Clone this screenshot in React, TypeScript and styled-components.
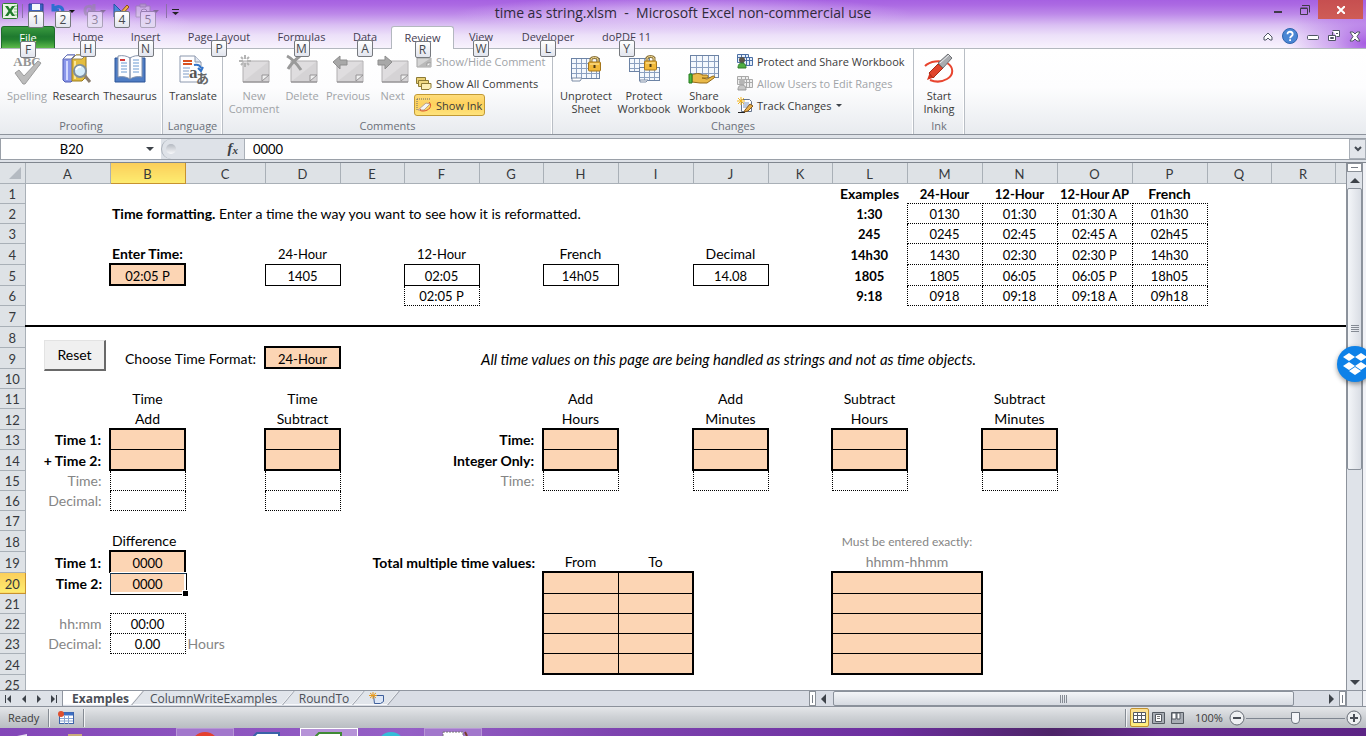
import React from 'react';
import styled, { createGlobalStyle, css } from 'styled-components';

const UI = '"Open Sans", "Noto Sans", sans-serif';
const CELL = 'Lato, "Open Sans", sans-serif';

const Global = createGlobalStyle`
  *, *::before, *::after { box-sizing: border-box; }
  html, body, #root { height: 100%; }
  body { margin: 0; overflow: hidden; font-family: ${UI}; font-size: 11px; color: #3b3b3b; }
  button, input { font: inherit; color: inherit; margin: 0; padding: 0; border: 0; background: none; }
  svg { display: block; flex: none; }
`;

const Window = styled.div`
  display: flex;
  flex-direction: column;
  height: 100vh;
  position: relative;
  overflow: hidden;
  background: #dee2e8;
`;

/* ---------- title bar and ribbon tabs ---------- */

const Top = styled.header`
  display: flex;
  flex-direction: column;
  flex: none;
  height: 49px;
  border-bottom: 1px solid #b3b8bf;
  background:
    radial-gradient(ellipse 80px 50px at 100% 90%, rgba(166, 92, 226, 1), rgba(166, 92, 226, 0.5) 40%, rgba(166, 92, 226, 0) 100%),
    radial-gradient(ellipse 110px 16px at 85px 24px, rgba(240, 228, 252, 0.6), rgba(240, 228, 252, 0) 100%),
    radial-gradient(ellipse 230px 18px at 50% 14px, rgba(235, 220, 250, 0.65), rgba(235, 220, 250, 0) 100%),
    linear-gradient(#a661e1 0, #ac6ae3 5px, #bd89e9 14px, #dabff3 25px, #ece0f9 35px, #f8f3fd 48px);
`;

const TitleBar = styled.div`
  display: grid;
  grid-template-columns: 200px 1fr 200px;
  height: 26px;
`;

const Title = styled.h1`
  margin: 0;
  text-align: center;
  font-size: 14px;
  font-weight: 400;
  line-height: 26px;
  color: #2f2a3a;
  white-space: pre;
`;

const QuickBar = styled.div`
  display: flex;
  align-items: flex-start;
  padding: 3px 0 0 2px;
`;

const QuickButton = styled.button<{ $w: number; $off?: boolean }>`
  position: relative;
  display: flex;
  align-items: center;
  gap: 2px;
  width: ${p => p.$w}px;
  height: 16px;
  opacity: ${p => (p.$off ? 0.5 : 1)};
`;

const Separator = styled.span`
  width: 1px;
  height: 14px;
  margin: 1px 5px 0 3px;
  background: #8c70a8;
`;

const KeyTip = styled.kbd<{ $low?: boolean; $left?: number }>`
  position: absolute;
  z-index: 2;
  top: ${p => (p.$low ? 14 : 8)}px;
  left: ${p => (p.$left === undefined ? '50%' : p.$left + 'px')};
  margin-left: ${p => (p.$left === undefined ? -8 : 0)}px;
  width: 16px;
  height: 17px;
  border: 1px solid #76797e;
  border-radius: 2px;
  background: linear-gradient(#fff, #e2e5ee);
  font: 12px/15px ${UI};
  text-align: center;
  color: #46484d;
`;

const WindowButtons = styled.div`
  display: flex;
  justify-content: flex-end;
  align-items: flex-start;
  padding-right: 3px;
`;

const WindowButton = styled.button<{ $close?: boolean }>`
  display: grid;
  place-items: center;
  width: ${p => (p.$close ? 45 : 27)}px;
  height: 19px;
  ${p => p.$close && css`
    && { background: linear-gradient(#c64f50, #cf5c56); }
  `}
`;

const TabRow = styled.nav`
  display: flex;
  flex: 1;
  padding-left: 1px;
`;

const Tab = styled.button<{ $w: number; $kind?: 'file' | 'active' }>`
  position: relative;
  width: ${p => p.$w}px;
  height: 22px;
  line-height: 20px;
  white-space: nowrap;
  color: #453d52;
  ${p => p.$kind === 'file' && css`
    && {
      margin-right: 4px;
      color: #fff;
      border: 1px solid #1f6b2c;
      border-bottom: 0;
      border-radius: 3px 3px 0 0;
      background: linear-gradient(#3a9a3f 0, #1f7a2f 45%, #23812f 60%, #5cba4a 100%);
    }
  `}
  ${p => p.$kind === 'active' && css`
    && {
      height: 23px;
      border: 1px solid #b3b8bf;
      border-bottom: 0;
      border-radius: 3px 3px 0 0;
      background: #fff;
    }
  `}
`;

const TabTools = styled.div`
  display: flex;
  align-items: center;
  gap: 9px;
  margin-left: auto;
  padding: 0 5px 3px 0;
`;

/* ---------- ribbon ---------- */

const Ribbon = styled.div`
  display: flex;
  flex: none;
  height: 86px;
  border-bottom: 1px solid #8d939c;
  background: linear-gradient(#fff 0, #fdfdfe 45%, #e8ebef 100%);
`;

const Group = styled.section<{ $w: number; $pad: number }>`
  display: flex;
  flex-direction: column;
  width: ${p => p.$w}px;
  border-right: 1px solid #b9bec5;
  box-shadow: inset -1px 0 #fff;
  padding-left: ${p => p.$pad}px;
`;

const GroupBody = styled.div`
  display: flex;
  flex: 1;
`;

const GroupName = styled.h2<{ $pad: number }>`
  margin: 0 0 1px -${p => p.$pad}px;
  font-size: 11px;
  font-weight: 400;
  line-height: 15px;
  text-align: center;
  color: #6b7079;
`;

const BigButton = styled.button<{ $w: number; $off?: boolean }>`
  && { color: ${p => (p.$off ? '#a0a3a7' : '#3b3b3b')}; }
  display: flex;
  flex-direction: column;
  align-items: center;
  flex: none;
  width: ${p => p.$w}px;
  && { padding-top: 4px; }
  line-height: 13px;
  svg { margin-bottom: 4px; }
  span { white-space: pre; }
`;

const SmallColumn = styled.div`
  display: flex;
  flex-direction: column;
  align-items: flex-start;
  padding-top: 1px;
`;

const SmallButton = styled.button<{ $off?: boolean; $on?: boolean }>`
  && {
    display: flex;
    align-items: center;
    gap: 4px;
    height: 22px;
    padding: 0 2px 0 1px;
    border: 1px solid transparent;
    border-radius: 3px;
    white-space: nowrap;
    color: ${p => (p.$off ? '#a0a3a7' : '#3b3b3b')};
  }
  ${p => p.$on && css`
    && {
      border-color: #c29a35;
      background: linear-gradient(#fddc7c, #fed15c 45%, #fee37c);
    }
  `}
`;

/* ---------- formula bar ---------- */

const FormulaBar = styled.div`
  display: flex;
  flex: none;
  height: 22px;
  margin-top: 3px;
  border: 1px solid #9aa0a8;
  border-right: 0;
  background: #dee2e8;
  font-family: ${CELL};
  font-size: 13px;
  color: #000;
`;

const NameBox = styled.div`
  display: flex;
  align-items: center;
  width: 160px;
  background: #fff;
  input { width: 145px; padding-right: 4px; text-align: center; outline: 0; }
`;

const FxArea = styled.div`
  display: flex;
  align-items: center;
  justify-content: space-between;
  width: 84px;
  padding-right: 6px;
  border: 1px solid #aab0b8;
  border-width: 0 1px 0 1px;
  border-radius: 11px 0 0 11px;
  font: italic bold 15px/18px "Liberation Serif", serif;
  color: #3b3f45;
  sub { font-size: 11px; vertical-align: -1px; }
`;

const Knob = styled.span`
  width: 10px;
  height: 10px;
  margin-left: 4px;
  border-radius: 5px;
  background: linear-gradient(#b4b9c1, #f8f9fb);
`;

const FormulaInput = styled.input`
  flex: 1;
  min-width: 0;
  && { padding-left: 8px; background: #fff; }
  outline: 0;
`;

const ExpandButton = styled.button`
  display: grid;
  place-items: center;
  width: 17px;
  && { border: 1px solid #a9afb7; background: #e3e6eb; }
`;

/* ---------- work sheet ---------- */

const Work = styled.main`
  display: flex;
  flex: 1;
  min-height: 0;
  margin-top: 2px;
  border-top: 1px solid #80868f;
`;

const SheetArea = styled.div`
  position: relative;
  flex: 1;
  min-width: 0;
  overflow: hidden;
  background: #fff;
`;

const Table = styled.table`
  table-layout: fixed;
  width: 1399px;
  border-collapse: collapse;
  font-family: ${CELL};
  font-size: 13px;
  line-height: 16px;
  color: #000;
`;

const Head = styled.th<{ $on?: boolean }>`
  padding: 2px 0 0;
  height: 20px;
  border: 1px solid ${p => (p.$on ? '#c7922f' : '#a9b0b7')};
  border-top: 0;
  border-left: 0;
  background: ${p => (p.$on ? 'linear-gradient(#fbce5a, #fdec70)' : '#dee2e6')};
  font-weight: 400;
  color: #36393d;
`;

const Row = styled.tr<{ $h: number }>`
  height: ${p => p.$h}px;
`;

const line = (e: string) =>
  e === 'm' ? '2px solid #000' : e === 't' ? '1px solid #000' : e === 'd' ? '1px dotted #000' : '0';

const Cell = styled.td<{ $edges?: string; $fill?: boolean; $bold?: boolean; $grey?: boolean; $italic?: boolean; $align?: string; $size?: number }>`
  position: relative;
  padding: 2px ${p => (p.$align === 'right' ? 8 : 0)}px 0 ${p => (p.$align === 'left' ? 2 : 0)}px;
  white-space: nowrap;
  text-align: ${p => p.$align ?? 'center'};
  font-weight: ${p => (p.$bold ? 700 : 400)};
  font-style: ${p => (p.$italic ? 'italic' : 'normal')};
  font-size: ${p => p.$size}px;
  color: ${p => (p.$grey ? '#858585' : '#000')};
  background: ${p => (p.$fill ? '#fcd5b4' : 'none')};
  background-clip: padding-box;
  ${p => {
    const e = p.$edges ?? '----';
    return `border-top:${line(e[0])};border-right:${line(e[1])};border-bottom:${line(e[2])};border-left:${line(e[3])};`;
  }}
`;

const Selection = styled.span`
  position: absolute;
  inset: 0 -2px -2px 0;
  border: 1px solid #16344f;
  border-right-color: #000;
  border-bottom-color: #000;
  box-shadow: inset -2px -2px #fff, 0 -1px #fff, -1px 0 #fff;
  &::after {
    content: '';
    position: absolute;
    right: -2px;
    bottom: -2px;
    width: 5px;
    height: 5px;
    background: #000;
    box-shadow: -1px -1px #fff;
  }
`;

const ResetButton = styled.button`
  && {
    position: absolute;
    left: 44px;
    top: 177px;
    width: 62px;
    height: 31px;
    border: 1px solid #e3e3e3;
    border-right: 2px solid #696969;
    border-bottom: 2px solid #696969;
    background: #f0f0f0;
    font: 14px/20px ${CELL};
    color: #000;
  }
`;

const VScroll = styled.div`
  display: flex;
  flex-direction: column;
  width: 17px;
  border: 1px solid #8d939c;
  border-width: 0 1px;
  background: #dfe3e9;
`;

const FrameEdge = styled.div`
  width: 3px;
  background: #f1f2f6;
`;

const SplitBox = styled.span<{ $tall?: boolean }>`
  display: grid;
  place-items: center;
  flex: none;
  width: ${p => (p.$tall ? 7 : 15)}px;
  height: ${p => (p.$tall ? 15 : 9)}px;
  border: 1px solid #8a9098;
  background: #fff;
  &::after {
    content: '';
    width: ${p => (p.$tall ? 1 : 7)}px;
    height: ${p => (p.$tall ? 8 : 1)}px;
    background: #777d86;
  }
`;

const ScrollButton = styled.button`
  display: grid;
  place-items: center;
  flex: none;
  width: 15px;
  height: 16px;
`;

const Track = styled.div`
  flex: 1;
  display: flex;
  flex-direction: column;
`;

const VThumb = styled.div`
  display: grid;
  place-items: center;
  height: 58%;
  border: 1px solid #8a919b;
  border-radius: 2px;
  background: linear-gradient(90deg, #f4f6f9, #d9dde4);
`;

const HThumb = styled.div`
  display: grid;
  place-items: center;
  flex: 1;
  margin: 0 30px 0 2px;
  border: 1px solid #8a919b;
  border-radius: 2px;
  background: linear-gradient(#f3f5f8, #d6dae1);
`;

/* ---------- sheet tabs ---------- */

const SheetTabs = styled.div`
  display: flex;
  flex: none;
  height: 17px;
  border-top: 1px solid #9096a0;
  border-bottom: 1px solid #8b919b;
  background: #d9dde5;
`;

const TabStrip = styled.div`
  display: flex;
  width: 809px;
  overflow: hidden;
`;

const TabNav = styled.div`
  position: relative;
  z-index: 2;
  display: flex;
  align-items: center;
  width: 63px;
  padding-left: 1px;
  border-right: 1px solid #9096a0;
  background: #dee2e8;
  button { display: grid; place-items: center; width: 15px; height: 14px; }
`;

const SheetTab = styled.button<{ $w: number; $active?: boolean }>`
  position: relative;
  z-index: ${p => (p.$active ? 1 : 0)};
  && {
    width: ${p => p.$w}px;
    font-size: ${p => (p.$active ? 12 : 12)}px;
    font-weight: ${p => (p.$active ? 700 : 400)};
    line-height: 14px;
    color: #4b4f57;
  }
  white-space: nowrap;
  &::before {
    content: '';
    position: absolute;
    z-index: -1;
    top: 0;
    bottom: 1px;
    right: 0;
    left: ${p => (p.$active ? -16 : 0)}px;
    transform: skewX(-40deg);
    border-right: 1px solid #8f959f;
    background: ${p => (p.$active ? '#fff' : '#e1e5eb')};
    box-shadow: inset -1px -1px #f8f9fb;
  }
  svg { margin: 0 auto; }
`;

/* ---------- status bar ---------- */

const StatusBar = styled.footer`
  display: flex;
  align-items: center;
  flex: none;
  height: 21px;
  padding-left: 8px;
  background: linear-gradient(#e4e6e9, #cfd2d6 45%, #b9bdc2);
`;

const Mode = styled.span`
  width: 40px;
`;

const FlexSpace = styled.span`
  flex: 1;
`;

const Views = styled.div`
  display: flex;
  margin-left: 3px;
`;

const Divider = styled.span`
  width: 2px;
  height: 18px;
  border-left: 1px solid #858b93;
  border-right: 1px solid #f2f3f5;
`;

const ViewButton = styled.button<{ $on?: boolean }>`
  display: grid;
  place-items: center;
  width: 19px;
  height: 19px;
  ${p => p.$on && css`
    && { border: 1px solid #c29230; border-radius: 2px; background: linear-gradient(#fcdf92, #ffef7c); }
  `}
`;

const Zoom = styled.div`
  display: flex;
  align-items: center;
  gap: 1px;
  margin-left: 8px;
  padding-right: 4px;
  > span { width: 33px; font-size: 11px; }
`;

const ZoomRange = styled.input`
  && { width: 99px; height: 16px; appearance: none; background: linear-gradient(#7e8590, #7e8590) 0 8px / 100% 1px no-repeat; }
  &::-webkit-slider-thumb {
    appearance: none;
    width: 9px;
    height: 12px;
    border: 1px solid #6b727c;
    border-radius: 1px 1px 5px 5px;
    background: #f4f5f8;
  }
`;

const TaskBar = styled.div`
  flex: none;
  height: 8px;
  overflow: hidden;
  background: linear-gradient(90deg, #8347b8 0, #9560c6 30%, #7e44b0 45%, #6d2fa0 65%, #4d2468 77%, #672a90 85%, #5c2485 100%);
`;

const TaskItems = styled.div`
  display: flex;
  gap: 4px;
  margin-left: -10px;
`;

const TaskItem = styled.span<{ $box?: boolean; $on?: boolean }>`
  flex: none;
  width: 58px;
  height: 40px;
  border: 1px solid ${p => (p.$on ? '#fff' : p.$box ? '#b796d6' : 'transparent')};
  background: ${p => (p.$on ? '#b693d8' : p.$box ? '#a277cc' : 'none')};
  svg { margin: 0 auto; }
`;

const DropboxBadge = styled.button`
  && {
    position: absolute;
    z-index: 5;
    right: -7px;
    top: 346px;
    display: grid;
    place-items: center;
    width: 36px;
    height: 36px;
    border-radius: 18px;
    background: #0d81e8;
    box-shadow: 0 2px 5px rgba(0, 0, 0, 0.4);
  }
`;

/* ---------- drawings ---------- */

const Arrow = ({ dir, size = 4, color = '#3d4249' }: { dir: 'up' | 'down' | 'left' | 'right'; size?: number; color?: string }) => {
  const s = size, w = s * 2;
  const pts = {
    up: `0,${s} ${w},${s} ${s},0`, down: `0,0 ${w},0 ${s},${s}`,
    left: `${s},0 ${s},${w} 0,${s}`, right: `0,0 0,${w} ${s},${s}`,
  }[dir];
  const vertical = dir === 'up' || dir === 'down';
  return <svg width={vertical ? w : s} height={vertical ? s : w}><polygon points={pts} fill={color} /></svg>;
};

const SpellingIcon = () => (
  <svg width="32" height="32" viewBox="0 0 32 32">
    <text x="16" y="13" textAnchor="middle" fontFamily="Liberation Serif" fontWeight="bold" fontSize="13" fill="#959595">ABC</text>
    <path d="M4 20l4-3 5 6L27 8l3 2-16 21h-2z" fill="#bcbcbc" stroke="#9c9c9c" strokeWidth="1" />
  </svg>
);
const ResearchIcon = () => (
  <svg width="32" height="32" viewBox="0 0 32 32">
    <path d="M3 6l4-4h8v23l-4 4H5l-2-2z" fill="#8b97ea" stroke="#4d5bb5" />
    <path d="M3 6l4-4h8l-4 4z" fill="#fff" stroke="#6672b8" />
    <path d="M6 8h2v19H6z" fill="#d3d9ff" />
    <path d="M12 6l4-4h10v22l-4 4H12z" fill="#e4bd3e" stroke="#9a7a1d" />
    <path d="M12 6l4-4h10l-4 4z" fill="#fff" stroke="#9a8a50" />
    <path d="M14 8h2v18h-2z" fill="#fbe596" />
    <circle cx="20" cy="18" r="6" fill="#d4ecfa" stroke="#7f8f9d" strokeWidth="2" />
    <path d="M16 17a4 4 0 0 1 5-3" stroke="#fff" strokeWidth="2" fill="none" />
    <path d="M25 23l5 6" stroke="#8a7d6d" strokeWidth="3" />
  </svg>
);
const ThesaurusIcon = () => (
  <svg width="32" height="32" viewBox="0 0 32 32">
    <path d="M1 5h30v24H1z" fill="#4e7cc4" stroke="#2c5597" />
    <path d="M4 3c5-1 9 0 12 2v21c-3-2-7-3-12-2zM28 3c-5-1-9 0-12 2v21c3-2 7-3 12-2z" fill="#fdfdff" stroke="#8795ad" />
    <path d="M7 10h6M7 13h6M7 16h6M7 19h6M19 7h6M19 10h6M19 13h6M19 16h6M19 19h6" stroke="#6b9ad2" />
    <path d="M6 7h5" stroke="#d43838" strokeWidth="2" />
  </svg>
);
const TranslateIcon = () => (
  <svg width="32" height="32" viewBox="0 0 32 32">
    <path d="M3 3h15l6 6v20H3z" fill="#fdfdff" stroke="#8c98ad" />
    <path d="M18 3v6h6" fill="#dfe6f2" stroke="#8c98ad" />
    <path d="M6 8h9M6 11h9" stroke="#d9501e" strokeWidth="2" />
    <path d="M6 15h7M6 18h6M6 21h6M6 24h6" stroke="#7e9bc4" />
    <path d="M17 12c5-1 6 1 7 3M21 15l3 3 2-4" stroke="#3273c9" strokeWidth="2" fill="none" />
    <text x="12" y="25" fontFamily="Liberation Serif" fontWeight="bold" fontSize="17" fill="#555">a</text>
    <text x="19" y="30" fontFamily="Noto Sans CJK JP" fontWeight="bold" fontSize="13" fill="#666">あ</text>
  </svg>
);
const NoteShape = () => (
  <>
    <path d="M5 8h26v21H5z" fill="#dfdddf" stroke="#b1afb1" />
    <path d="M6 28L30 9v19z" fill="#cfcdcf" opacity=".6" />
    <path d="M24 28v-6h7z" fill="#efefef" stroke="#969496" />
    <path d="M5 29h26" stroke="#858385" strokeWidth="1" />
  </>
);
const CommentIcon = ({ kind }: { kind: 'new' | 'delete' | 'prev' | 'next' }) => (
  <svg width="32" height="32" viewBox="0 0 32 32">
    <NoteShape />
    {kind === 'new' && <path d="M7 2v4M7 10v4M1 8h4M9 8h4M3 4l2 2M9 10l2 2M11 4L9 6M5 10l-2 2" stroke="#b4b4b4" strokeWidth="2" />}
    {kind === 'delete' && <path d="M1 3c6 3 10 8 14 14M14 3C9 7 5 11 2 16" stroke="#9a9a9a" strokeWidth="3" fill="none" />}
    {kind === 'prev' && <path d="M1 9l7-6v4h7v5H8v4z" fill="#a8a8a8" stroke="#8d8d8d" />}
    {kind === 'next' && <path d="M15 9L8 3v4H1v5h7v4z" fill="#a8a8a8" stroke="#8d8d8d" />}
  </svg>
);
const GridShape = ({ x, y, w, h, s }: { x: number; y: number; w: number; h: number; s: number }) => (
  <>
    <rect x={x + 0.5} y={y + 0.5} width={w} height={h} fill="#f4f8fd" stroke="#6c83a5" />
    {Array.from({ length: Math.ceil(w / s) - 1 }, (_, i) => <path key={'v' + i} d={`M${x + 0.5 + (i + 1) * s} ${y + 1}v${h - 1}`} stroke="#8ba0c0" />)}
    {Array.from({ length: Math.ceil(h / s) - 1 }, (_, i) => <path key={'h' + i} d={`M${x + 1} ${y + 0.5 + (i + 1) * s}h${w - 1}`} stroke="#8ba0c0" />)}
  </>
);
const Lock = ({ x, y }: { x: number; y: number }) => (
  <g transform={`translate(${x} ${y})`}>
    <path d="M3 8V4a4 3 0 0 1 7 0v4" fill="none" stroke="#8c743c" strokeWidth="3" />
    <path d="M3 8V4a4 3 0 0 1 7 0v4" fill="none" stroke="#f3dc96" />
    <rect x=".5" y="7" width="12" height="9" rx="1" fill="#f1b93a" stroke="#a4751b" />
    <path d="M2 9h9" stroke="#fde9a6" />
    <path d="M6.500 10v3" stroke="#4c3814" strokeWidth="2" />
  </g>
);
const UnprotectIcon = () => (
  <svg width="32" height="32" viewBox="0 0 32 32">
    <GridShape x={1} y={5} w={28} h={20} s={5} />
    <path d="M2 25v3h8l2-3z" fill="#fff" stroke="#7a8ba5" /><Lock x={18} y={2} />
  </svg>
);
const ProtectBookIcon = () => (
  <svg width="32" height="32" viewBox="0 0 32 32">
    <GridShape x={1} y={5} w={20} h={13} s={5} /><GridShape x={11} y={14} w={20} h={13} s={5} />
    <path d="M12 27v2h6l2-2z" fill="#fff" stroke="#7a8ba5" /><Lock x={16} y={1} />
  </svg>
);
const ShareIcon = () => (
  <svg width="32" height="32" viewBox="0 0 32 32">
    <GridShape x={2} y={2} w={28} h={22} s={6} />
    <path d="M4 22c4-2 8-2 10 0h5c2 1 1 3-1 3h-4l5 1 6-3c2 0 2 1 1 2l-7 5H12l-8-1z" fill="#e9b949" stroke="#956a17" />
    <path d="M1 21h3v9H1z" fill="#4db83e" stroke="#247a1e" />
  </svg>
);
const InkIcon = () => (
  <svg width="32" height="32" viewBox="0 0 32 32">
    <path d="M2 13C7 8 17 7 24 10c7 4 7 12 0 16-5 3-12 3-17 1" fill="none" stroke="#e8452f" strokeWidth="2" />
    <path d="M4 27l3-8 5 5z" fill="#d8331d" />
    <path d="M6 20L15 11l5 4-10 10z" fill="#e0442c" stroke="#a52c18" />
    <path d="M15 10l10-9 4 4-9 10z" fill="#a9abaf" stroke="#6e7074" />
    <path d="M17 10l9-8" stroke="#eceef0" />
  </svg>
);
const SmallNote = ({ kind }: { kind: 'hide' | 'all' | 'ink' }) => (
  <svg width="16" height="16" viewBox="0 0 16 16">
    {kind === 'hide' && <><path d="M1 5h14v9H1z" fill="#d5d5d5" stroke="#a3a3a3" /><path d="M1 14L15 5v9z" fill="#b9b9b9" /><path d="M11 13v-3h4" fill="#fff" stroke="#999" /></>}
    {kind === 'all' && <><path d="M.5 2.500h9v6h-9z" fill="#e9cf74" stroke="#8c7a35" /><path d="M2.500 5.500h10v6h-10z" fill="#f0d983" stroke="#8c7a35" /><path d="M5.500 8.500h9.500v4l-2 2h-7.500z" fill="#fbeeb5" stroke="#8c7a35" /></>}
    {kind === 'ink' && <><path d="M1 2h13" stroke="#6b6b6b" strokeDasharray="1 1" /><path d="M1 2v12" stroke="#6b6b6b" strokeDasharray="1 1" /><path d="M2 13l8-7 4 1-6 6z" fill="#f4f4f6" stroke="#bca28a" /><path d="M13 5c4 4 0 9-6 9-3 0-4-1-2-2" fill="none" stroke="#d9502f" strokeWidth="1" /></>}
  </svg>
);
const PeopleGrid = ({ grey }: { grey?: boolean }) => (
  <svg width="16" height="16" viewBox="0 0 16 16">
    <g stroke={grey ? '#a9a9a9' : '#4a6fa5'} fill={grey ? '#eee' : '#e4edfa'}>
      <path d="M.5 1.500h11v8H.5zM4.500 1.500v8M8.500 1.500v8M.5 4.500h11" /><path d="M6.500 4.500h9v8h-9zM9.500 4.500v8M12.500 4.500v8M6.500 7.500h9" />
    </g>
    <circle cx="5" cy="7" r="3" fill={grey ? '#b5b5b5' : '#5b544a'} />
    <path d="M1 15c0-4 2-5 4-5s4 1 4 5z" fill={grey ? '#c6c6c6' : '#4fae43'} stroke={grey ? '#999' : '#2f7a29'} />
  </svg>
);
const TrackIcon = () => (
  <svg width="16" height="16" viewBox="0 0 16 16">
    <path d="M4.500 2.500h8l2 2v10h-10z" fill="#fff" stroke="#65758e" />
    <path d="M6 6h6M6 8h6M6 10h5" stroke="#7a92bb" />
    <path d="M4 0v8M0 4h8M1 1l6 6M7 1L1 7" stroke="#f3b51d" />
    <path d="M1 15.500h7" stroke="#222" /><path d="M8 13l5-6 3 2-5 5-4 1z" fill="#e9b04a" stroke="#83551b" />
  </svg>
);
const ExcelIcon = () => (
  <svg width="17" height="16" viewBox="0 0 17 16">
    <rect x=".5" y=".5" width="15" height="15" rx="1" fill="#e8f4e4" stroke="#2f7d33" />
    <path d="M12 3h3M12 6h3M12 9h3M12 12h3" stroke="#7fb97a" />
    <path d="M3 3h3l2 3 2-3h3L9.500 8l3.500 5h-3l-2-3-2 3H3l3.500-5z" fill="#1f7b2b" />
  </svg>
);
const SaveIcon = () => (
  <svg width="16" height="16" viewBox="0 0 16 16"><path d="M1 1h14v14H1z" fill="#3d62c2" stroke="#27438f" /><path d="M4 1h8v6H4z" fill="#f4f6fb" /></svg>
);
const UndoIcon = ({ flip }: { flip?: boolean }) => (
  <svg width="16" height="16" viewBox="0 0 16 16">
    <path d={flip ? 'M12 1v7H6M11 7C10 2 3 2 3 8c0 2 1 3 2 4' : 'M2 1v6h6M3 6c3-4 9-3 9 3'} fill="none" stroke={flip ? '#8f8b96' : '#2e6fd0'} strokeWidth="3" />
  </svg>
);
const DesignIcon = () => (
  <svg width="16" height="16" viewBox="0 0 16 16"><path d="M1 1v13h13z" fill="#4c86da" stroke="#2355a3" /><path d="M5 12L14 2l2 2-9 10z" fill="#f0b146" stroke="#8a4e1b" /></svg>
);
const PasteIcon = () => (
  <svg width="16" height="16" viewBox="0 0 16 16"><path d="M1 3h14v11H1z" fill="#e4e1e8" stroke="#8f8b96" /><path d="M5 1h6v3H5z" fill="#bbb" stroke="#8f8b96" /><circle cx="9" cy="9" r="3" fill="#fff" stroke="#888" /></svg>
);
const HelpIcon = () => (
  <svg width="16" height="16" viewBox="0 0 16 16"><circle cx="8" cy="8" r="7.500" fill="#4a86d4" stroke="#2f64ad" /><path d="M5.500 6.200c0-3.500 5.200-3 5.200 0 0 2-2.600 2-2.600 4M8.100 11.300v1.700" stroke="#fff" strokeWidth="1.800" fill="none" /></svg>
);
const Grip = ({ across }: { across?: boolean }) => (
  <svg width="8" height="8"><path d={across ? 'M.5 0v8M2.500 0v8M4.500 0v8M6.500 0v8' : 'M0 .5h8M0 2.500h8M0 4.500h8M0 6.500h8'} stroke="#858b94" /></svg>
);
const RoundSign = ({ plus }: { plus?: boolean }) => (
  <svg width="16" height="16"><circle cx="8" cy="8" r="7" fill="#eef0f2" stroke="#666c75" /><path d={plus ? 'M4 8h8M8 4v8' : 'M4 8h8'} stroke="#4a4f57" strokeWidth="2" /></svg>
);

/* ---------- sheet data ---------- */

type CellData = { text?: React.ReactNode; edges?: string; fill?: boolean; bold?: boolean; grey?: boolean; italic?: boolean; size?: number; align?: 'left' | 'right'; span?: number };

const COLS: [string, number][] = [
  ['A', 85], ['B', 75], ['C', 80], ['D', 75], ['E', 64], ['F', 75], ['G', 64], ['H', 75], ['I', 75], ['J', 75],
  ['K', 64], ['L', 75], ['M', 75], ['N', 75], ['O', 75], ['P', 75], ['Q', 64], ['R', 64], ['S', 64],
];
const HEIGHTS = [20, 20, 20, 21, 21, 20, 21, 21, 21, 20, 20, 21, 20, 21, 20, 20, 20, 21, 21, 21, 20, 20, 20, 21, 20];

const cells: Record<string, CellData> = {
  B2: { text: <><b>Time formatting.</b> Enter a time the way you want to see how it is reformatted.</>, align: 'left', span: 9 },
  B4: { text: 'Enter Time:', bold: true, align: 'left' },
  D4: { text: '24-Hour' }, F4: { text: '12-Hour' }, H4: { text: 'French' }, J4: { text: 'Decimal' },
  B5: { text: '02:05 P', fill: true, edges: 'mmmm' },
  D5: { text: '1405', edges: 'tttt' }, F5: { text: '02:05', edges: 'tttt' },
  H5: { text: '14h05', edges: 'tttt' }, J5: { text: '14.08', edges: 'tttt' },
  F6: { text: '02:05 P', edges: 'tddd' },
  B9: { text: 'Choose Time Format:', align: 'right', span: 2 },
  D9: { text: '24-Hour', fill: true, edges: 'mmmm' },
  G9: { text: 'All time values on this page are being handled as strings and not as time objects.', italic: true, size: 15, align: 'left', span: 8 },
  A13: { text: 'Time 1:', bold: true, size: 14, align: 'right' }, A14: { text: '+ Time 2:', bold: true, size: 14, align: 'right' },
  A15: { text: 'Time:', grey: true, align: 'right' }, A16: { text: 'Decimal:', grey: true, align: 'right' },
  G13: { text: 'Time:', bold: true, align: 'right' }, F14: { text: 'Integer Only:', bold: true, align: 'right', span: 2 },
  G15: { text: 'Time:', grey: true, align: 'right' },
  B18: { text: 'Difference', align: 'left' },
  A19: { text: 'Time 1:', bold: true, size: 14, align: 'right' }, A20: { text: 'Time 2:', bold: true, size: 14, align: 'right' },
  B19: { text: '0000', fill: true, edges: 'mmtm' },
  B20: { text: <>0000<Selection /></>, fill: true, size: 13, edges: 't---' },
  A22: { text: 'hh:mm', grey: true, align: 'right' }, A23: { text: 'Decimal:', grey: true, align: 'right' },
  B22: { text: '00:00', edges: 'dddd' }, B23: { text: '0.00', edges: 'dddd' },
  C23: { text: 'Hours', grey: true, align: 'left' },
  E19: { text: 'Total multiple time values:', bold: true, align: 'right', span: 3 },
  H19: { text: 'From' }, I19: { text: 'To' },
  L18: { text: 'Must be entered exactly:', grey: true, size: 12, span: 2 },
  L19: { text: 'hhmm-hhmm', grey: true, span: 2 },
};

const titled: [string, string, string][] = [
  ['B', 'Time', 'Add'], ['D', 'Time', 'Subtract'], ['H', 'Add', 'Hours'],
  ['J', 'Add', 'Minutes'], ['L', 'Subtract', 'Hours'], ['N', 'Subtract', 'Minutes'],
];
titled.forEach(([c, first, second]) => {
  cells[c + 11] = { text: first };
  cells[c + 12] = { text: second };
  cells[c + 13] = { fill: true, edges: 'mmtm' };
  cells[c + 14] = { fill: true, edges: 'tmmm' };
  cells[c + 15] = { edges: 'mddd' };
});
cells.B16 = cells.D16 = { edges: 'dddd' };

for (let r = 20; r <= 24; r++) {
  const top = r === 20 ? 'm' : 't', bottom = r === 24 ? 'm' : 't';
  cells['H' + r] = { fill: true, edges: `${top}t${bottom}m` };
  cells['I' + r] = { fill: true, edges: `${top}m${bottom}t` };
  cells['L' + r] = { fill: true, edges: `${top}m${bottom}m`, span: 2 };
}

const examples = [
  ['Examples', '24-Hour', '12-Hour', '12-Hour AP', 'French'],
  ['1:30', '0130', '01:30', '01:30 A', '01h30'],
  ['245', '0245', '02:45', '02:45 A', '02h45'],
  ['14h30', '1430', '02:30', '02:30 P', '14h30'],
  ['1805', '1805', '06:05', '06:05 P', '18h05'],
  ['9:18', '0918', '09:18', '09:18 A', '09h18'],
];
examples.forEach((row, r) => row.forEach((text, i) => {
  cells['LMNOP'[i] + (r + 1)] = { text, bold: r === 0 || i === 0, edges: r > 0 && i > 0 ? 'dddd' : undefined };
}));
COLS.forEach(([c]) => { cells[c + 7] = { edges: '--m-' }; });

/* Values with digits are set a step smaller than worded labels. */
const sizeOf = (c: CellData) => c.size ?? (typeof c.text === 'string' && /\d/.test(c.text) ? 13 : 14);

const SheetRow = ({ n, h }: { n: number; h: number }) => {
  const out: React.ReactNode[] = [];
  for (let i = 0; i < COLS.length; i++) {
    const c = cells[COLS[i][0] + n] ?? {};
    out.push(
      <Cell key={i} colSpan={c.span} $edges={c.edges} $fill={c.fill} $bold={c.bold} $grey={c.grey} $italic={c.italic} $align={c.align} $size={sizeOf(c)}>
        {c.text}
      </Cell>,
    );
    i += (c.span ?? 1) - 1;
  }
  return <Row $h={h}><Head scope="row" $on={n === 20}>{n}</Head>{out}</Row>;
};

const TABS: [string, string, number, ('file' | 'active')?][] = [
  ['File', 'F', 54, 'file'], ['Home', 'H', 58], ['Insert', 'N', 57], ['Page Layout', 'P', 90], ['Formulas', 'M', 75],
  ['Data', 'A', 52], ['Review', 'R', 63, 'active'], ['View', 'W', 54], ['Developer', 'L', 80], ['doPDF 11', 'Y', 77],
];

const Big = ({ w, icon, label, off }: { w: number; icon: React.ReactNode; label: string; off?: boolean }) => (
  <BigButton $w={w} $off={off} disabled={off}>{icon}<span>{label}</span></BigButton>
);

const RibbonGroup = ({ w, pad, name, children }: { w: number; pad: number; name: string; children: React.ReactNode }) => (
  <Group $w={w} $pad={pad}>
    <GroupBody>{children}</GroupBody>
    <GroupName $pad={pad}>{name}</GroupName>
  </Group>
);

export default function App() {
  return (
    <Window>
      <Global />
      <Top>
        <TitleBar>
          <QuickBar>
            <ExcelIcon />
            <Separator />
            <QuickButton $w={23} aria-label="Save"><SaveIcon /><KeyTip $left={0}>1</KeyTip></QuickButton>
            <QuickButton $w={31} aria-label="Undo"><UndoIcon /><Arrow dir="down" size={3} color="#111" /><KeyTip $left={4}>2</KeyTip></QuickButton>
            <QuickButton $w={31} $off aria-label="Redo"><UndoIcon flip /><Arrow dir="down" size={3} color="#555" /><KeyTip $left={5}>3</KeyTip></QuickButton>
            <QuickButton $w={22} aria-label="Design mode"><DesignIcon /><KeyTip $left={1}>4</KeyTip></QuickButton>
            <QuickButton $w={28} $off aria-label="Paste"><PasteIcon /><Arrow dir="down" size={3} color="#555" /><KeyTip $left={5}>5</KeyTip></QuickButton>
            <Separator />
            <svg width="7" height="14"><path d="M0 6.500h7" stroke="#222" /><path d="M0 9h7l-3.500 3z" fill="#222" /></svg>
          </QuickBar>
          <Title>{'time as string.xlsm  -  Microsoft Excel non-commercial use'}</Title>
          <WindowButtons>
            <WindowButton aria-label="Minimize"><svg width="8" height="8"><path d="M0 6h8" stroke="#3f3a48" strokeWidth="2" /></svg></WindowButton>
            <WindowButton aria-label="Restore"><svg width="10" height="10"><path d="M.5 3.500h7v6h-7zM.5 3h7M2 .5h7.500v7" fill="none" stroke="#3f3a48" /></svg></WindowButton>
            <WindowButton $close aria-label="Close"><svg width="8" height="8"><path d="M0 0l8 8M8 0L0 8" stroke="#fff" strokeWidth="2" /></svg></WindowButton>
          </WindowButtons>
        </TitleBar>
        <TabRow>
          {TABS.map(([name, key, w, kind]) => (
            <Tab key={name} $w={w} $kind={kind}>{name}<KeyTip $low>{key}</KeyTip></Tab>
          ))}
          <TabTools>
            <svg width="10" height="9"><path d="M1 5l4-4 4 4v3H7L5 6 3 8H1z" fill="#fff" stroke="#4f5564" /></svg>
            <HelpIcon />
            <svg width="12" height="10"><rect x=".5" y="4.500" width="11" height="4" rx="1" fill="#fff" stroke="#4f5564" /></svg>
            <svg width="12" height="12"><path d="M4.500.5h7v6h-3M.5 5.500h7v5h-7zM2.500 7.500h3v1h-3zM4.500 2v3M8 3.500h2" fill="#fff" stroke="#4f5564" /></svg>
            <svg width="12" height="11"><path d="M1 1h3l2 2 2-2h3L8 5.500 11 10H8L6 8l-2 2H1l3-4.500z" fill="#fff" stroke="#4f5564" /></svg>
          </TabTools>
        </TabRow>
      </Top>

      <Ribbon>
        <RibbonGroup w={163} pad={3} name="Proofing">
          <Big w={48} off icon={<SpellingIcon />} label="Spelling" />
          <Big w={50} icon={<ResearchIcon />} label="Research" />
          <Big w={58} icon={<ThesaurusIcon />} label="Thesaurus" />
        </RibbonGroup>
        <RibbonGroup w={60} pad={3} name="Language">
          <Big w={54} icon={<TranslateIcon />} label="Translate" />
        </RibbonGroup>
        <RibbonGroup w={330} pad={6} name="Comments">
          <Big w={50} off icon={<CommentIcon kind="new" />} label={'New\nComment'} />
          <Big w={46} off icon={<CommentIcon kind="delete" />} label="Delete" />
          <Big w={46} off icon={<CommentIcon kind="prev" />} label="Previous" />
          <Big w={43} off icon={<CommentIcon kind="next" />} label="Next" />
          <SmallColumn>
            <SmallButton $off disabled><SmallNote kind="hide" />Show/Hide Comment</SmallButton>
            <SmallButton><SmallNote kind="all" />Show All Comments</SmallButton>
            <SmallButton $on><SmallNote kind="ink" />Show Ink</SmallButton>
          </SmallColumn>
        </RibbonGroup>
        <RibbonGroup w={361} pad={4} name="Changes">
          <Big w={58} icon={<UnprotectIcon />} label={'Unprotect\nSheet'} />
          <Big w={58} icon={<ProtectBookIcon />} label={'Protect\nWorkbook'} />
          <Big w={62} icon={<ShareIcon />} label={'Share\nWorkbook'} />
          <SmallColumn>
            <SmallButton><PeopleGrid />Protect and Share Workbook</SmallButton>
            <SmallButton $off disabled><PeopleGrid grey />Allow Users to Edit Ranges</SmallButton>
            <SmallButton><TrackIcon />Track Changes<Arrow dir="down" size={3} /></SmallButton>
          </SmallColumn>
        </RibbonGroup>
        <RibbonGroup w={51} pad={0} name="Ink">
          <Big w={50} icon={<InkIcon />} label={'Start\nInking'} />
        </RibbonGroup>
      </Ribbon>

      <FormulaBar>
        <NameBox>
          <input aria-label="Name box" defaultValue="B20" />
          <Arrow dir="down" />
        </NameBox>
        <FxArea><Knob /><span>f<sub>x</sub></span></FxArea>
        <FormulaInput aria-label="Formula" defaultValue="0000" />
        <ExpandButton aria-label="Expand formula bar"><svg width="8" height="6"><path d="M1 1l3 3 3-3" fill="none" stroke="#444a52" strokeWidth="2" /></svg></ExpandButton>
      </FormulaBar>

      <Work>
        <SheetArea>
          <Table>
            <colgroup>
              <col width={25} />
              {COLS.map(([c, w]) => <col key={c} width={w} />)}
            </colgroup>
            <thead>
              <Row $h={20}>
                <Head aria-label="Select all"><svg width="22" height="15"><path d="M21 1v12H9z" fill="#b4bac1" /></svg></Head>
                {COLS.map(([c]) => <Head key={c} scope="col" $on={c === 'B'}>{c === 'S' ? '' : c}</Head>)}
              </Row>
            </thead>
            <tbody>
              {HEIGHTS.map((h, i) => <SheetRow key={i} n={i + 1} h={h} />)}
            </tbody>
          </Table>
          <ResetButton>Reset</ResetButton>
        </SheetArea>
        <VScroll>
          <SplitBox />
          <ScrollButton aria-label="Scroll up"><Arrow dir="up" size={5} /></ScrollButton>
          <Track><VThumb><Grip /></VThumb></Track>
          <ScrollButton aria-label="Scroll down"><Arrow dir="down" size={5} /></ScrollButton>
        </VScroll>
        <FrameEdge />
      </Work>

      <SheetTabs>
        <TabStrip>
          <TabNav>
            <button aria-label="First sheet"><svg width="7" height="8"><path d="M.5 0v8" stroke="#3d4249" /><path d="M6 0v8L2 4z" fill="#3d4249" /></svg></button>
            <button aria-label="Previous sheet"><Arrow dir="left" /></button>
            <button aria-label="Next sheet"><Arrow dir="right" /></button>
            <button aria-label="Last sheet"><svg width="7" height="8"><path d="M6.500 0v8" stroke="#3d4249" /><path d="M1 0v8l4-4z" fill="#3d4249" /></svg></button>
          </TabNav>
          <SheetTab $w={75} $active>Examples</SheetTab>
          <SheetTab $w={151}>ColumnWriteExamples</SheetTab>
          <SheetTab $w={70}>RoundTo</SheetTab>
          <SheetTab $w={35} aria-label="Insert sheet">
            <svg width="16" height="13" viewBox="0 0 16 13"><path d="M4.500 3.500h10v6l-3 2h-6z" fill="#dce6f6" stroke="#3e5f9b" /><path d="M4 0v7M0 3.500h8M1 1l6 5M7 1L1 6" stroke="#e79a1c" /></svg>
          </SheetTab>
        </TabStrip>
        <SplitBox $tall />
        <ScrollButton aria-label="Scroll left"><Arrow dir="left" size={5} /></ScrollButton>
        <HThumb><Grip across /></HThumb>
        <ScrollButton aria-label="Scroll right"><Arrow dir="right" size={5} /></ScrollButton>
        <SplitBox $tall />
        <VScroll as="span" />
        <FrameEdge />
      </SheetTabs>

      <StatusBar>
        <Mode>Ready</Mode>
        <Divider />
        <svg width="33" height="16" viewBox="0 0 33 16"><rect x="9.500" y="2.500" width="14" height="11" fill="#fff" stroke="#3d62a8" /><path d="M10 4h13" stroke="#3d6fc4" strokeWidth="3" /><path d="M10 8.500h13M10 11h13M14.500 6v8M18.500 6v8" stroke="#8aa5d2" /><circle cx="11" cy="4" r="3" fill="#e0502e" /></svg>
        <Divider />
        <FlexSpace />
        <Divider />
        <Views>
          <ViewButton $on aria-label="Normal view"><svg width="13" height="11"><path d="M.5.5h12v10H.5zM4.500.5v10M8.500.5v10M.5 3.500h12M.5 7.500h12" fill="#fff" stroke="#555a62" /></svg></ViewButton>
          <ViewButton aria-label="Page layout view"><svg width="13" height="12"><path d="M.5.5h12v11H.5z" fill="#a8adb4" stroke="#555a62" /><path d="M3.500 2.500h6v7h-6z" fill="#fff" stroke="#555a62" /><path d="M5 4.500h3M5 6.500h3" stroke="#777" /></svg></ViewButton>
          <ViewButton aria-label="Page break preview"><svg width="13" height="12"><path d="M.5.5h12v11H.5z" fill="#a8adb4" stroke="#555a62" /><path d="M1 1h4v6H1zM6 1h3v6H6z" fill="#fff" stroke="#555a62" /></svg></ViewButton>
        </Views>
        <Zoom>
          <span>100%</span>
          <button aria-label="Zoom out"><RoundSign /></button>
          <ZoomRange type="range" aria-label="Zoom" defaultValue={50} />
          <button aria-label="Zoom in"><RoundSign plus /></button>
        </Zoom>
      </StatusBar>

      <TaskBar>
        <TaskItems>
          <TaskItem><svg width="20" height="8"><path d="M3 8L18 5v3z" fill="#e8e2f2" /></svg></TaskItem>
          <TaskItem><svg width="58" height="8"><path d="M15 5h14v3H15z" fill="#c9ac7a" /></svg></TaskItem>
          <TaskItem />
          <TaskItem $box><svg width="30" height="30"><circle cx="15" cy="17" r="14" fill="#e5402f" /></svg></TaskItem>
          <TaskItem><svg width="28" height="30"><path d="M4 4h22v26H1V7z" fill="#fff" stroke="#3a62a8" strokeWidth="2" /></svg></TaskItem>
          <TaskItem $on><svg width="30" height="30"><path d="M5 4h22v26H2V7z" fill="#fff" stroke="#3f8a35" strokeWidth="2" /></svg></TaskItem>
          <TaskItem><svg width="30" height="30"><circle cx="15" cy="17" r="14" fill="#35bdd8" /></svg></TaskItem>
          <TaskItem $box><svg width="30" height="30"><path d="M5 3h20v27H5z" fill="#fff" stroke="#777" strokeDasharray="2 1" /><path d="M27 3l2 4" stroke="#7a3b2a" strokeWidth="2" /></svg></TaskItem>
        </TaskItems>
      </TaskBar>

      <DropboxBadge aria-label="Dropbox">
        <svg width="24" height="24" viewBox="0 0 24 24"><path d="M6 1l6 4-6 4-6-4zM18 1l6 4-6 4-6-4zM6 10l6 4-6 4-6-4zM18 10l6 4-6 4-6-4zM12 15l6 4-6 4-6-4z" fill="#fff" /></svg>
      </DropboxBadge>
    </Window>
  );
}
